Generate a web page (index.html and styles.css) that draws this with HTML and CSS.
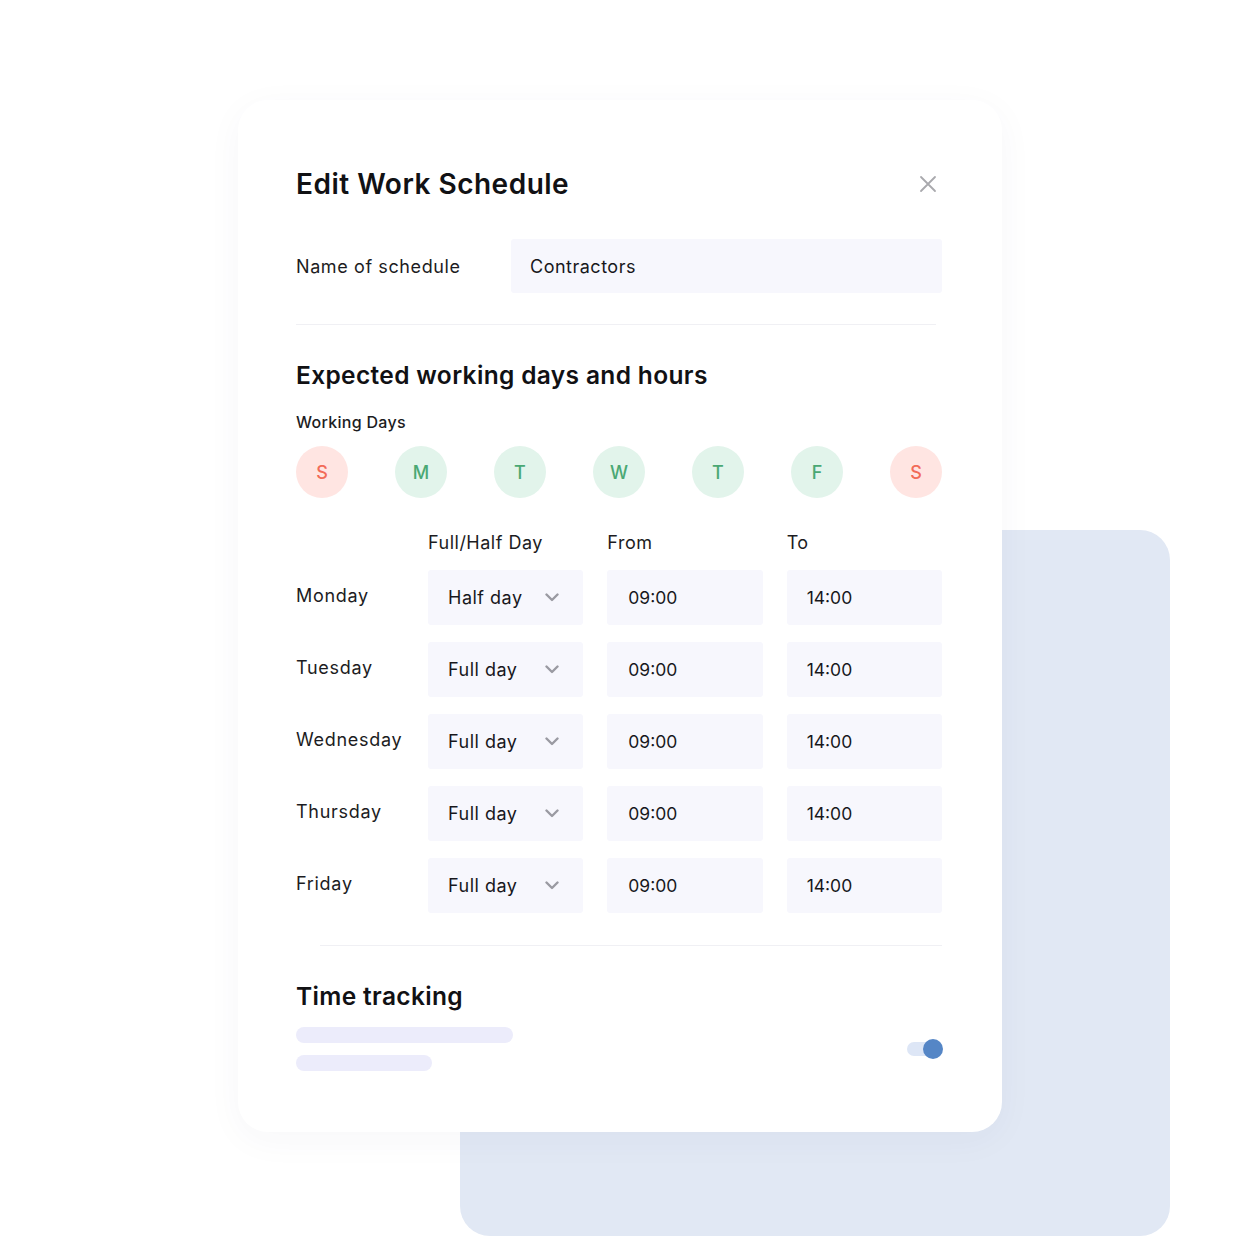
FILE: index.html
```html
<!DOCTYPE html>
<html lang="en">
<head>
<meta charset="utf-8">
<title>Edit Work Schedule</title>
<link rel="stylesheet" href="styles.css">
</head>
<body>
<div class="stage">
  <div class="backdrop"></div>
  <div class="card">
    <div class="header">
      <h1 class="title">Edit Work Schedule</h1>
      <svg class="close" width="18" height="18" viewBox="0 0 18 18" aria-hidden="true">
        <path d="M2 2 L16 16 M16 2 L2 16" stroke="#a9a9ad" stroke-width="1.8" stroke-linecap="round" fill="none"/>
      </svg>
    </div>

    <div class="name-row">
      <div class="label">Name of schedule</div>
      <div class="field name-field">Contractors</div>
    </div>

    <div class="divider"></div>

    <h2 class="section-title">Expected working days and hours</h2>
    <div class="sub-label">Working Days</div>
    <div class="days">
      <div class="day off">S</div>
      <div class="day on">M</div>
      <div class="day on">T</div>
      <div class="day on">W</div>
      <div class="day on">T</div>
      <div class="day on">F</div>
      <div class="day off">S</div>
    </div>

    <div class="grid head-row">
      <div class="col-head"></div>
      <div class="col-head">Full/Half Day</div>
      <div class="col-head">From</div>
      <div class="col-head">To</div>
    </div>

    <div class="grid rows">
      <div class="day-name">Monday</div>
      <div class="field select">Half day<svg class="chev" width="14" height="9" viewBox="0 0 14 9"><path d="M1.5 1.5 L7 7 L12.5 1.5" stroke="#9a9aa2" stroke-width="2.4" fill="none" stroke-linecap="round" stroke-linejoin="round"/></svg></div>
      <div class="field time">09:00</div>
      <div class="field time to">14:00</div>

      <div class="day-name">Tuesday</div>
      <div class="field select">Full day<svg class="chev" width="14" height="9" viewBox="0 0 14 9"><path d="M1.5 1.5 L7 7 L12.5 1.5" stroke="#9a9aa2" stroke-width="2.4" fill="none" stroke-linecap="round" stroke-linejoin="round"/></svg></div>
      <div class="field time">09:00</div>
      <div class="field time to">14:00</div>

      <div class="day-name">Wednesday</div>
      <div class="field select">Full day<svg class="chev" width="14" height="9" viewBox="0 0 14 9"><path d="M1.5 1.5 L7 7 L12.5 1.5" stroke="#9a9aa2" stroke-width="2.4" fill="none" stroke-linecap="round" stroke-linejoin="round"/></svg></div>
      <div class="field time">09:00</div>
      <div class="field time to">14:00</div>

      <div class="day-name">Thursday</div>
      <div class="field select">Full day<svg class="chev" width="14" height="9" viewBox="0 0 14 9"><path d="M1.5 1.5 L7 7 L12.5 1.5" stroke="#9a9aa2" stroke-width="2.4" fill="none" stroke-linecap="round" stroke-linejoin="round"/></svg></div>
      <div class="field time">09:00</div>
      <div class="field time to">14:00</div>

      <div class="day-name">Friday</div>
      <div class="field select">Full day<svg class="chev" width="14" height="9" viewBox="0 0 14 9"><path d="M1.5 1.5 L7 7 L12.5 1.5" stroke="#9a9aa2" stroke-width="2.4" fill="none" stroke-linecap="round" stroke-linejoin="round"/></svg></div>
      <div class="field time">09:00</div>
      <div class="field time to">14:00</div>
    </div>

    <div class="divider divider-2"></div>

    <h2 class="section-title tt-title">Time tracking</h2>
    <div class="tt-row">
      <div class="bars">
        <div class="bar bar-long"></div>
        <div class="bar bar-short"></div>
      </div>
      <div class="toggle"><div class="knob"></div></div>
    </div>
  </div>
</div>
</body>
</html>
```

FILE: styles.css
```css
* { box-sizing: border-box; }
html, body { margin: 0; padding: 0; background: #ffffff; }
body {
  font-family: "Inter", "Noto Sans", "Liberation Sans", sans-serif;
  color: #1c1c22;
}
.stage {
  position: relative;
  width: 1236px;
  height: 1236px;
  overflow: hidden;
  padding: 100px 0 0 238px;
}
.backdrop {
  position: absolute;
  left: 460px;
  top: 530px;
  width: 710px;
  height: 706px;
  background: #e1e8f4;
  border-radius: 30px;
  z-index: 0;
}
.card {
  position: relative;
  z-index: 1;
  width: 764px;
  height: 1032px;
  background: #ffffff;
  border-radius: 30px;
  box-shadow: 0 8px 36px rgba(40, 60, 100, 0.04);
  padding: 64px 60px 0 58px;
}
.header {
  height: 40px;
  display: flex;
  align-items: center;
  justify-content: space-between;
}
.title {
  margin: 0;
  font-size: 28px;
  font-weight: 600;
  letter-spacing: 0.5px;
  color: #111114;
}
.close { margin-right: 5px; }
.name-row {
  margin-top: 35px;
  display: flex;
  align-items: center;
}
.label {
  width: 215px;
  font-size: 18px;
  letter-spacing: 0.6px;
}
.field {
  background: #f7f7fd;
  border-radius: 3px;
  height: 54px;
  display: flex;
  align-items: center;
  font-size: 18px;
  letter-spacing: 0.5px;
  color: #17171c;
}
.name-field {
  flex: 1;
  padding-left: 19px;
}
.divider {
  margin-top: 31px;
  height: 1px;
  background: #f0f0f4;
  width: 640px;
}
.divider-2 {
  margin-top: 32px;
  margin-left: 24px;
  width: 622px;
}
.section-title {
  margin: 33px 0 0;
  height: 34px;
  line-height: 34px;
  font-size: 24.5px;
  font-weight: 600;
  letter-spacing: 0.35px;
  color: #111114;
}
.sub-label {
  margin-top: 18px;
  height: 24px;
  line-height: 24px;
  font-size: 16px;
  font-weight: 500;
  letter-spacing: 0.3px;
}
.days {
  margin-top: 12px;
  display: flex;
  justify-content: space-between;
}
.day {
  width: 52px;
  height: 52px;
  border-radius: 50%;
  display: flex;
  align-items: center;
  justify-content: center;
  font-size: 18px;
  font-weight: 500;
}
.day.off { background: #ffe5e2; color: #f26b58; }
.day.on { background: #e2f4eb; color: #4aa874; }
.grid {
  display: grid;
  grid-template-columns: 108px repeat(3, 1fr);
  column-gap: 24px;
}
.head-row {
  margin-top: 33px;
  height: 24px;
}
.rows {
  margin-top: 15px;
  row-gap: 17px;
  grid-auto-rows: 55px;
}
.col-head {
  font-size: 18px;
  line-height: 24px;
  letter-spacing: 0.5px;
}
.day-name {
  display: flex;
  align-items: center;
  font-size: 18px;
  letter-spacing: 0.7px;
  padding-bottom: 4px;
}
.rows .field { height: 55px; }
.select {
  padding: 0 24px 0 20px;
  justify-content: space-between;
}
.time { padding-left: 21px; letter-spacing: 0; font-size: 17.5px; }
.time.to { padding-left: 20px; }
.tt-title { margin-top: 33px; }
.tt-row {
  margin-top: 14px;
  display: flex;
  align-items: center;
  justify-content: space-between;
}
.bars {
  display: flex;
  flex-direction: column;
  gap: 12px;
}
.bar {
  height: 16px;
  border-radius: 8px;
  background: #ececfb;
}
.bar-long { width: 217px; }
.bar-short { width: 136px; }
.toggle {
  position: relative;
  width: 32px;
  height: 14px;
  border-radius: 7px;
  background: #dde6f6;
  margin-right: 3px;
}
.knob {
  position: absolute;
  right: -4px;
  top: -3px;
  width: 20px;
  height: 20px;
  border-radius: 50%;
  background: #5586c6;
}
```
